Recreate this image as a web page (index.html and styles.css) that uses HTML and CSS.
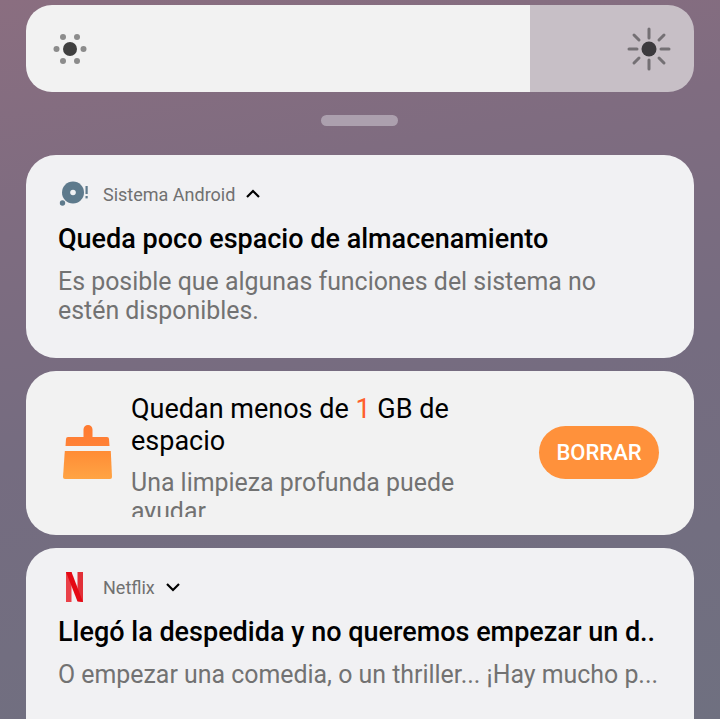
FILE: index.html
```html
<!DOCTYPE html>
<html lang="es">

<head>
  <meta charset="UTF-8">
  <meta name="viewport" content="width=device-width, initial-scale=1.0">
  <title>Notificaciones</title>
  <link rel="stylesheet" href="styles.css">
</head>

<body>
  <div class="shade">
    <div class="brightness">
      <div class="brightness-fill">
        <svg class="sun-low" width="36" height="32" viewBox="0 0 36 32">
          <circle cx="18" cy="16" r="7" fill="#404040"/>
          <g fill="#8c8c8c">
            <circle cx="4.500" cy="16" r="3"/>
            <circle cx="31.500" cy="16" r="3"/>
            <circle cx="11" cy="4" r="3"/>
            <circle cx="25" cy="4" r="3"/>
            <circle cx="11" cy="28" r="3"/>
            <circle cx="25" cy="28" r="3"/>
          </g>
        </svg>
      </div>
      <div class="brightness-rest">
        <svg class="sun-high" width="44" height="44" viewBox="0 0 44 44">
          <g stroke="#747074" stroke-width="3" stroke-linecap="round">
            <path d="M22 2V11"/>
            <path d="M22 33V42"/>
            <path d="M2 22H10"/>
            <path d="M34 22H42"/>
            <path d="M7 8L12 13"/>
            <path d="M37 8L32 13"/>
            <path d="M7 36L12 31"/>
            <path d="M37 36L32 31"/>
          </g>
          <circle cx="22" cy="22" r="7.5" fill="#3c3a3e"/>
        </svg>
      </div>
    </div>

    <div class="handle"></div>

    <div class="card card-system">
      <div class="app-row">
        <svg class="app-icon" width="32" height="26" viewBox="0 0 32 26">
          <circle cx="15" cy="11.5" r="11" fill="#5e7a8c"/>
          <circle cx="15" cy="11.5" r="2.8" fill="#f1f1f3"/>
          <circle cx="4.500" cy="22" r="2.700" fill="#5e7a8c"/>
          <rect x="27.500" y="5" width="2.200" height="8" fill="#5e7a8c"/>
          <rect x="27.500" y="15" width="2.200" height="2.400" fill="#5e7a8c"/>
        </svg>
        <span class="app-name">Sistema Android</span>
        <svg class="chevron" width="16" height="10" viewBox="0 0 16 10">
          <path d="M2 8L8 2L14 8" fill="none" stroke="#000" stroke-width="2.200"/>
        </svg>
      </div>
      <div class="title">Queda poco espacio de almacenamiento</div>
      <div class="text">Es posible que algunas funciones del sistema no estén disponibles.</div>
    </div>

    <div class="card card-clean">
      <svg class="clean-icon" width="50" height="56" viewBox="0 0 50 56">
        <defs>
          <linearGradient id="brush-top" x1="0" y1="0" x2="0" y2="1">
            <stop offset="0" stop-color="#ff7a30"/>
            <stop offset="1" stop-color="#ff8238"/>
          </linearGradient>
          <linearGradient id="brush-bottom" x1="0" y1="0" x2="0" y2="1">
            <stop offset="0" stop-color="#ff8c36"/>
            <stop offset="1" stop-color="#ffa444"/>
          </linearGradient>
        </defs>
        <path d="M20.500 12V4.500a4.500 4.500 0 0 1 9 0V12H44a2 2 0 0 1 2 2L46.500 21H2.500L3 14a2 2 0 0 1 2-2Z" fill="url(#brush-top)"/>
        <path d="M1.800 26H47.800L49 52a2 2 0 0 1-2 2H2a2 2 0 0 1-2-2Z" fill="url(#brush-bottom)"/>
      </svg>
      <div class="clean-body">
        <div class="clean-title">Quedan menos de <span class="accent">1</span> GB de espacio</div>
        <div class="text clean-text">Una limpieza profunda puede ayudar</div>
      </div>
      <button class="clean-button" type="button">BORRAR</button>
    </div>

    <div class="card card-netflix">
      <div class="app-row">
        <svg class="app-icon" width="32" height="30" viewBox="0 0 32 30">
          <path d="M8 0H13.500V30L8 30Z" fill="#ea4048"/>
          <path d="M19.500 0H25V30L19.500 29Z" fill="#e23038"/>
          <path d="M8 0H13.500L25 30L19.500 29.500Z" fill="#e50914"/>
        </svg>
        <span class="app-name">Netflix</span>
        <svg class="chevron" width="16" height="10" viewBox="0 0 16 10">
          <path d="M2 2L8 8L14 2" fill="none" stroke="#000" stroke-width="2.200"/>
        </svg>
      </div>
      <div class="title ellipsis">Llegó la despedida y no queremos empezar un d..</div>
      <div class="text ellipsis">O empezar una comedia, o un thriller... ¡Hay mucho p...</div>
    </div>
  </div>
</body>
</html>
```

FILE: styles.css
```css
/* Notification shade */

html,
body {
  margin: 0;
  height: 719px;
  overflow: hidden;
}

body {
  background: linear-gradient(170deg, #8a6e80 0%, #7f6c80 25%, #756c80 55%, #6f7080 100%);
  font-family: Roboto, "Noto Sans", sans-serif;
}

.shade {
  height: 719px;
  padding: 5px 26px 0;
  box-sizing: border-box;
  overflow: hidden;
}

/* Brightness slider */

.brightness {
  display: flex;
  height: 87px;
  border-radius: 26px;
  overflow: hidden;
}

.brightness-fill {
  display: flex;
  align-items: center;
  width: 504px;
  padding-left: 26px;
  box-sizing: border-box;
  background-color: #f2f2f2;
}

.brightness-rest {
  display: flex;
  flex: 1;
  align-items: center;
  justify-content: flex-end;
  padding-right: 23px;
  background-color: #c7bfc6;
}

.handle {
  width: 77px;
  height: 11px;
  margin: 23px 0 29px 295px;
  border-radius: 6px;
  background-color: #aca0ae;
}

/* Cards */

.card {
  margin-bottom: 13px;
  border-radius: 30px;
  background-color: #f1f1f3;
  box-sizing: border-box;
}

.card-system {
  height: 203px;
  padding: 23px 32px 0;
}

.card-clean {
  display: flex;
  align-items: center;
  height: 164px;
  padding: 0 35px 0 37px;
  background-color: #f2f2f2;
}

.card-netflix {
  height: 200px;
  padding: 23px 32px 0;
}

.app-row {
  display: flex;
  align-items: center;
  height: 32px;
}

.app-name {
  margin-left: 13px;
  font-size: 18px;
  color: #707070;
}

.chevron {
  margin-left: 10px;
}

.title {
  margin-top: 12px;
  font-size: 27px;
  line-height: 34px;
  font-weight: 500;
  color: #000;
}

.text {
  margin-top: 11px;
  font-size: 24.9px;
  line-height: 29px;
  color: #727272;
}

.ellipsis {
  white-space: nowrap;
  overflow: hidden;
}

/* Low storage card */

.clean-icon {
  flex-shrink: 0;
}

.clean-body {
  align-self: flex-start;
  width: 370px;
  height: 124px;
  margin: 22px 0 0 18px;
  overflow: hidden;
}

.clean-title {
  font-size: 27px;
  line-height: 32px;
  color: #000;
}

.accent {
  color: #ff5f2b;
}

.clean-text {
  width: 340px;
}

.clean-button {
  width: 120px;
  height: 53px;
  margin: 0 0 2px auto;
  padding: 0;
  border: none;
  border-radius: 27px;
  background-color: #ff913b;
  color: #fff;
  font-family: inherit;
  font-size: 22px;
  font-weight: 500;
}
```
